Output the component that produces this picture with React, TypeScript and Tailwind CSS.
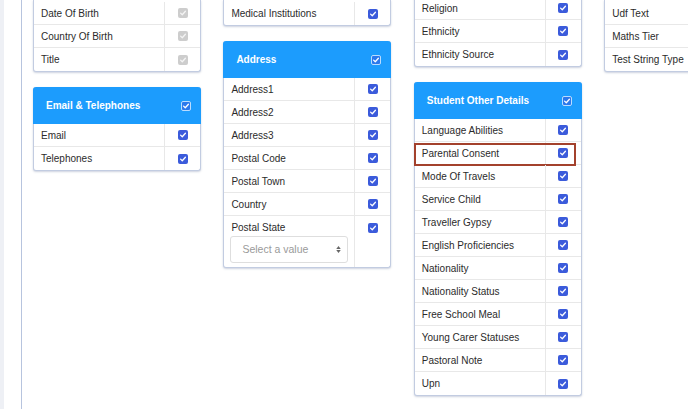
import React from "react";

type Row = { label: string; disabled?: boolean; select?: boolean; highlight?: boolean };

function Check({ disabled, header }: { disabled?: boolean; header?: boolean }) {
  const cls = header
    ? "bg-[#2b78ec] border border-[#b9dcff]"
    : disabled
    ? "bg-[#cdcdcd]"
    : "bg-[#3b5bdb]";
  return (
    <span className={`w-[10px] h-[10px] rounded-[2px] flex items-center justify-center ${cls}`}>
      <svg viewBox="0 0 10 10" className="w-[8px] h-[8px]">
        <path d="M2 5.2 L4.1 7.2 L8 2.8" fill="none" stroke={disabled ? "#f4f4f4" : "#ffffff"} strokeWidth="1.6" strokeLinecap="round" strokeLinejoin="round" />
      </svg>
    </span>
  );
}

function RowItem({ row, last }: { row: Row; last: boolean }) {
  if (row.select) {
    return (
      <div className={`flex ${last ? "" : "border-b border-[#e8e8e8]"}`}>
        <div className="w-[131px] border-r border-[#e8e8e8] pt-[6px] pb-[4px] px-[6px]">
          <div className="h-[12px] leading-[12px] pl-[1px] text-[10px] text-[#2b2b2b]">{row.label}</div>
          <div className="mt-[2px] h-[27px] border border-[#dedede] rounded-[3px] flex items-center justify-between pl-[11px] pr-[6px]">
            <span className="text-[10.5px] text-[#9a9a9a]">Select a value</span>
            <span className="flex flex-col items-center leading-none text-[#666]">
              <svg viewBox="0 0 6 4" className="w-[5px] h-[3px]"><path d="M0 4 L3 0 L6 4Z" fill="#666" /></svg>
              <svg viewBox="0 0 6 4" className="w-[5px] h-[3px] mt-[1px]"><path d="M0 0 L3 4 L6 0Z" fill="#666" /></svg>
            </span>
          </div>
        </div>
        <div className="flex-1 flex justify-center pt-[7px]">
          <Check />
        </div>
      </div>
    );
  }
  return (
    <div className={`relative flex h-[23px] ${last ? "" : "border-b border-[#e8e8e8]"}`}>
      <div className="w-[131px] border-r border-[#e8e8e8] pl-[7px] flex items-center text-[10px] text-[#2b2b2b] whitespace-nowrap">
        {row.label}
      </div>
      <div className="flex-1 flex items-center justify-center">
        <Check disabled={row.disabled} />
      </div>
      {row.highlight && (
        <div className="absolute left-[-1px] top-[1px] w-[162px] h-[23px] border-2 border-[#a3412c]" />
      )}
    </div>
  );
}

function Card({ title, rows, clipped, className = "" }: { title?: string; rows: Row[]; clipped?: boolean; className?: string }) {
  return (
    <div
      className={`w-[168px] bg-white border border-[#c2cce1] rounded-[3px] shadow-[0_1px_2px_rgba(60,80,130,0.25)] ${
        clipped ? "border-t-0 rounded-t-none pt-[2px]" : ""
      } ${title ? "border-t-0" : ""} ${className}`}
    >
      {title && (
        <div className="h-[37px] -mx-px bg-[#1c9cfd] rounded-t-[3px] flex items-center justify-between pl-[13px] pr-[10px]">
          <span className="text-[10px] font-bold text-white">{title}</span>
          <Check header />
        </div>
      )}
      {rows.map((r, i) => (
        <RowItem key={r.label} row={r} last={i === rows.length - 1} />
      ))}
    </div>
  );
}

export default function App() {
  const r = (labels: string[], extra: Partial<Row> = {}) => labels.map((l) => ({ label: l, ...extra }));
  return (
    <div
      className="w-[688px] h-[409px] overflow-hidden bg-white flex"
      style={{ fontFamily: '"Liberation Sans", Arial, sans-serif' }}
    >
      <div className="w-[4px] h-full shrink-0 bg-[#eef0f5]" />
      <div className="w-[17px] h-full shrink-0" />
      <div className="flex-1 min-w-0 h-full border-l border-[#b7c4de] pl-[11px] flex items-start gap-[22.4px]">
        <div className="flex flex-col shrink-0">
          <Card clipped rows={r(["Date Of Birth", "Country Of Birth", "Title"], { disabled: true })} />
          <Card className="mt-[15px]" title="Email & Telephones" rows={r(["Email", "Telephones"])} />
        </div>
        <div className="flex flex-col shrink-0">
          <Card clipped rows={r(["Medical Institutions"])} />
          <Card
            className="mt-[15px]"
            title="Address"
            rows={[
              ...r(["Address1", "Address2", "Address3", "Postal Code", "Postal Town", "Country"]),
              { label: "Postal State", select: true },
            ]}
          />
        </div>
        <div className="flex flex-col shrink-0 mt-[-5px]">
          <Card clipped rows={r(["Religion", "Ethnicity", "Ethnicity Source"])} />
          <Card
            className="mt-[15px]"
            title="Student Other Details"
            rows={[
              { label: "Language Abilities" },
              { label: "Parental Consent", highlight: true },
              ...r([
                "Mode Of Travels",
                "Service Child",
                "Traveller Gypsy",
                "English Proficiencies",
                "Nationality",
                "Nationality Status",
                "Free School Meal",
                "Young Carer Statuses",
                "Pastoral Note",
                "Upn",
              ]),
            ]}
          />
        </div>
        <div className="flex flex-col shrink-0">
          <Card clipped rows={r(["Udf Text", "Maths Tier", "Test String Type"])} />
        </div>
      </div>
    </div>
  );
}
